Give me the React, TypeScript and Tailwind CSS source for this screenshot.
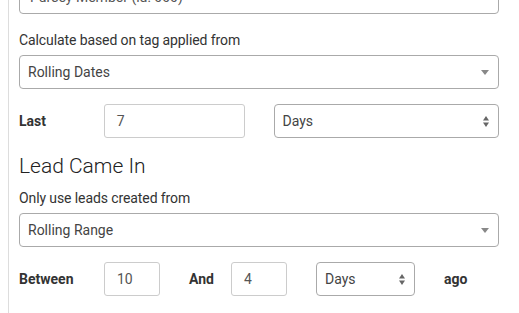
import React from "react";

function DownArrow() {
    return (
        <svg width="8" height="5" viewBox="0 0 8 5" className="shrink-0">
            <path d="M0 0 L8 0 L4 5 Z" fill="#888" />
        </svg>
    );
}

function UpDownArrows() {
    return (
        <svg width="6" height="11" viewBox="0 0 6 11" className="shrink-0">
            <path d="M0 4.5 L6 4.5 L3 0 Z" fill="#666" />
            <path d="M0 6.5 L6 6.5 L3 11 Z" fill="#666" />
        </svg>
    );
}

function Field({ value, className = "" }: { value: string; className?: string }) {
    return (
        <div className={`h-[34px] flex items-center border border-[#ccc] rounded-[3px] bg-white pl-[12px] text-[14px] text-[#555] ${className}`}>
            {value}
        </div>
    );
}

function Select({ value, double = false, className = "" }: { value: string; double?: boolean; className?: string }) {
    return (
        <div className={`h-[34px] flex items-center justify-between border border-[#aaa] rounded-[4px] bg-white pl-[8px] pr-[9px] text-[14px] text-[#444] ${className}`}>
            <span>{value}</span>
            {double ? <UpDownArrows /> : <DownArrow />}
        </div>
    );
}

export default function App() {
    return (
        <div className="w-[519px] h-[313px] overflow-hidden bg-white font-['Roboto',sans-serif] text-[#333]">
            <div className="flow-root ml-[8px] border-l border-[#ddd] h-full pl-[10px] w-[491px]">
                <div className="-mt-[20px] h-[34px] flex items-center border border-[#aaa] rounded-[4px] pl-[10px] text-[14px] text-[#555]">
                    Pursey Member (id: 000)
                </div>

                <div className="mt-[16px] text-[14px] leading-[20px] tracking-[-0.1px]">Calculate based on tag applied from</div>
                <Select value="Rolling Dates" className="mt-[5px]" />

                <div className="mt-[15px] flex items-center">
                    <div className="w-[85px] text-[14px] font-bold">Last</div>
                    <Field value="7" className="w-[141px]" />
                    <Select value="Days" double className="ml-[29px] w-[226px]" />
                </div>

                <div className="mt-[13px] text-[21px] leading-[30px] font-light text-[#222]">Lead Came In</div>
                <div className="mt-[7px] text-[14px] leading-[20px] tracking-[-0.1px]">Only use leads created from</div>
                <Select value="Rolling Range" className="mt-[5px]" />

                <div className="mt-[15px] flex items-center">
                    <div className="w-[85px] text-[14px] font-bold">Between</div>
                    <Field value="10" className="w-[56px]" />
                    <div className="ml-[29px] w-[42px] text-[14px] font-bold">And</div>
                    <Field value="4" className="w-[56px]" />
                    <Select value="Days" double className="ml-[29px] w-[99px]" />
                    <div className="ml-[29px] text-[14px] font-bold">ago</div>
                </div>
            </div>
        </div>
    );
}
